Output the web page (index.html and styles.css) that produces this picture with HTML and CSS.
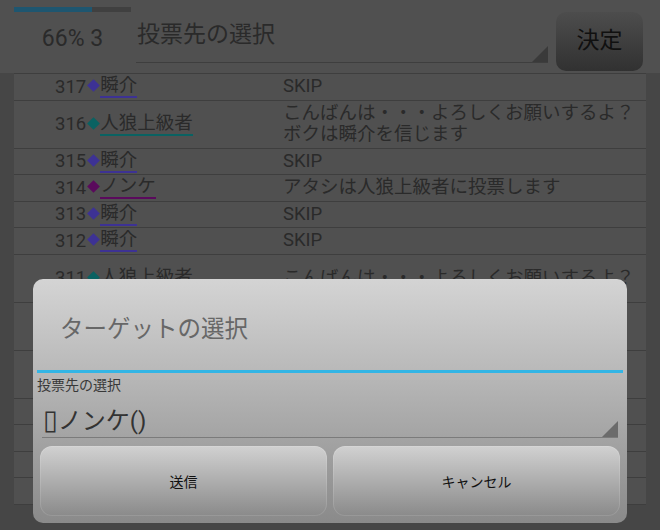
FILE: index.html
```html
<!DOCTYPE html>
<html lang="ja">
<head>
  <meta charset="UTF-8">
  <meta name="viewport" content="width=device-width, initial-scale=1.0">
  <title>投票先の選択</title>
  <link rel="stylesheet" href="styles.css">
</head>
<body>
  <div class="screen">
    <div class="topbar">
      <div class="status">
        <div class="progress"><div class="progress-fill" style="width: 67%"></div></div>
        <div class="status-text">66% 3</div>
      </div>
      <div class="spinner">
        <span>投票先の選択</span>
        <span class="spinner-arrow"></span>
      </div>
      <button class="decide">決定</button>
    </div>

    <div class="log">
      <div class="row">
        <div class="speaker"><span class="num">317</span><span class="mark c-blue"></span><span class="name c-blue">瞬介</span></div>
        <div class="msg">SKIP</div>
      </div>
      <div class="row double">
        <div class="speaker"><span class="num">316</span><span class="mark c-teal"></span><span class="name c-teal">人狼上級者</span></div>
        <div class="msg">こんばんは・・・よろしくお願いするよ？<br>ボクは瞬介を信じます</div>
      </div>
      <div class="row">
        <div class="speaker"><span class="num">315</span><span class="mark c-blue"></span><span class="name c-blue">瞬介</span></div>
        <div class="msg">SKIP</div>
      </div>
      <div class="row">
        <div class="speaker"><span class="num">314</span><span class="mark c-plum"></span><span class="name c-plum">ノンケ</span></div>
        <div class="msg">アタシは人狼上級者に投票します</div>
      </div>
      <div class="row">
        <div class="speaker"><span class="num">313</span><span class="mark c-blue"></span><span class="name c-blue">瞬介</span></div>
        <div class="msg">SKIP</div>
      </div>
      <div class="row">
        <div class="speaker"><span class="num">312</span><span class="mark c-blue"></span><span class="name c-blue">瞬介</span></div>
        <div class="msg">SKIP</div>
      </div>
      <div class="row double">
        <div class="speaker"><span class="num">311</span><span class="mark c-teal"></span><span class="name c-teal">人狼上級者</span></div>
        <div class="msg">こんばんは・・・よろしくお願いするよ？</div>
      </div>
      <!-- ダイアログの下に隠れる行 -->
      <div class="row double"></div>
      <div class="row double"></div>
      <div class="row"></div>
      <div class="row"></div>
      <div class="row"></div>
      <div class="row"></div>
    </div>

    <!-- 投票ダイアログ -->
    <div class="dialog">
      <div class="dialog-title">ターゲットの選択</div>
      <div class="dialog-rule"></div>
      <div class="field-label">投票先の選択</div>
      <div class="field-spinner">
        <span><span class="tofu">▯</span>ノンケ()</span>
        <span class="field-arrow"></span>
      </div>
      <div class="dialog-buttons">
        <button class="dialog-btn">送信</button>
        <button class="dialog-btn">キャンセル</button>
      </div>
    </div>
  </div>
</body>
</html>
```

FILE: styles.css
```css
:root {
  --dim-bg: #505050;
  --dim-edge: #464646;
  --dim-line: #3e3e3e;
  --dim-text: #2a2a2a;
  --holo-blue: #33b5e5;
  --font-family: Roboto, "Noto Sans CJK JP", sans-serif;
}

* {
  margin: 0;
  padding: 0;
  box-sizing: border-box;
}

body {
  font-family: var(--font-family);
  background-color: var(--dim-edge);
  color: var(--dim-text);
}

.screen {
  position: relative;
  width: 660px;
  height: 530px;
  overflow: hidden;
  background-color: var(--dim-edge);
}

/* 上部バー */
.topbar {
  display: flex;
  height: 73px;
  background-color: var(--dim-bg);
}

.status {
  width: 117px;
  margin-left: 14px;
  display: flex;
  flex-direction: column;
  align-items: center;
}

.progress {
  align-self: stretch;
  height: 5px;
  margin-top: 7px;
  background-color: #404040;
}

.progress-fill {
  height: 100%;
  background-color: #1e5670;
}

.status-text {
  margin-top: 12px;
  font-size: 23px;
  line-height: 30px;
}

.spinner {
  position: relative;
  width: 412px;
  height: 63px;
  margin-left: 5px;
  padding: 20px 0 0 1px;
  font-size: 23px;
  line-height: 30px;
  border-bottom: 1px solid var(--dim-line);
}

.spinner-arrow {
  position: absolute;
  right: 0;
  bottom: 0;
  width: 16px;
  height: 16px;
  background-color: #3a3a3a;
  clip-path: polygon(100% 0, 100% 100%, 0 100%);
}

.decide {
  width: 87px;
  height: 59px;
  margin: 12px 0 0 8px;
  padding-bottom: 8px;
  border: none;
  border-radius: 10px;
  background: linear-gradient(#4d4d4d, #313131);
  font-family: var(--font-family);
  font-size: 23px;
  color: #101010;
}

/* ログ一覧 */
.log {
  margin: 0 14px;
  background-color: var(--dim-bg);
  border-top: 1px solid var(--dim-line);
}

.row {
  display: grid;
  grid-template-columns: 269px 1fr;
  align-items: center;
  min-height: 26.5px;
  border-bottom: 1px solid var(--dim-line);
}

.row.double {
  min-height: 48px;
}

.speaker {
  display: flex;
  align-items: center;
  padding-left: 41px;
  font-size: 18.5px;
}

.num {
  line-height: 20px;
}

/* 色付きの菱形マーク */
.mark {
  flex-shrink: 0;
  width: 9px;
  height: 9px;
  margin: 0 2px 2px 3px;
  transform: rotate(45deg);
}

.name {
  line-height: 20px;
  padding-bottom: 1px;
  border-bottom: 2px solid;
}

.mark.c-blue { background-color: #3d3294; }
.mark.c-teal { background-color: #0a6262; }
.mark.c-plum { background-color: #5a0a5c; }
.name.c-blue { border-color: #3d3294; }
.name.c-teal { border-color: #0a6262; }
.name.c-plum { border-color: #5a0a5c; }

.msg {
  font-size: 18.5px;
  line-height: 21px;
  white-space: nowrap;
}

/* ダイアログ */
.dialog {
  position: absolute;
  left: 33px;
  top: 279px;
  width: 594px;
  height: 244px;
  display: flex;
  flex-direction: column;
  border-radius: 10px;
  background: linear-gradient(#d4d4d4 0%, #bababa 36%, #a6a6a6 62%, #8a8a8a 100%);
}

.dialog-title {
  height: 91px;
  padding: 5px 0 0 27px;
  display: flex;
  align-items: center;
  font-size: 23.5px;
  color: #676767;
}

.dialog-rule {
  height: 3px;
  margin: 0 4px;
  background-color: var(--holo-blue);
}

.field-label {
  margin-top: 4px;
  padding-left: 4px;
  font-size: 14px;
  line-height: 16px;
  color: #383838;
}

.field-spinner {
  position: relative;
  height: 45px;
  margin: 0 9px;
  padding: 12px 0 0 1px;
  font-size: 24px;
  line-height: 30px;
  color: #333333;
  border-bottom: 1px solid #7b7b7b;
}

.tofu {
  font-family: "DejaVu Sans", sans-serif;
  font-size: 27px;
  line-height: 30px;
}

.field-arrow {
  position: absolute;
  right: 0;
  bottom: 0;
  width: 16px;
  height: 16px;
  background-color: #6b6b6b;
  clip-path: polygon(100% 0, 100% 100%, 0 100%);
}

.dialog-buttons {
  display: flex;
  gap: 6px;
  height: 70px;
  margin-top: 8px;
  padding: 0 7px;
}

.dialog-btn {
  flex: 1;
  border: none;
  border-radius: 12px;
  background: linear-gradient(#d1d1d1, #8a8a8a);
  box-shadow: inset 0 0 0 1px rgba(255, 255, 255, 0.12);
  font-family: var(--font-family);
  font-size: 14px;
  color: #111111;
}
```
